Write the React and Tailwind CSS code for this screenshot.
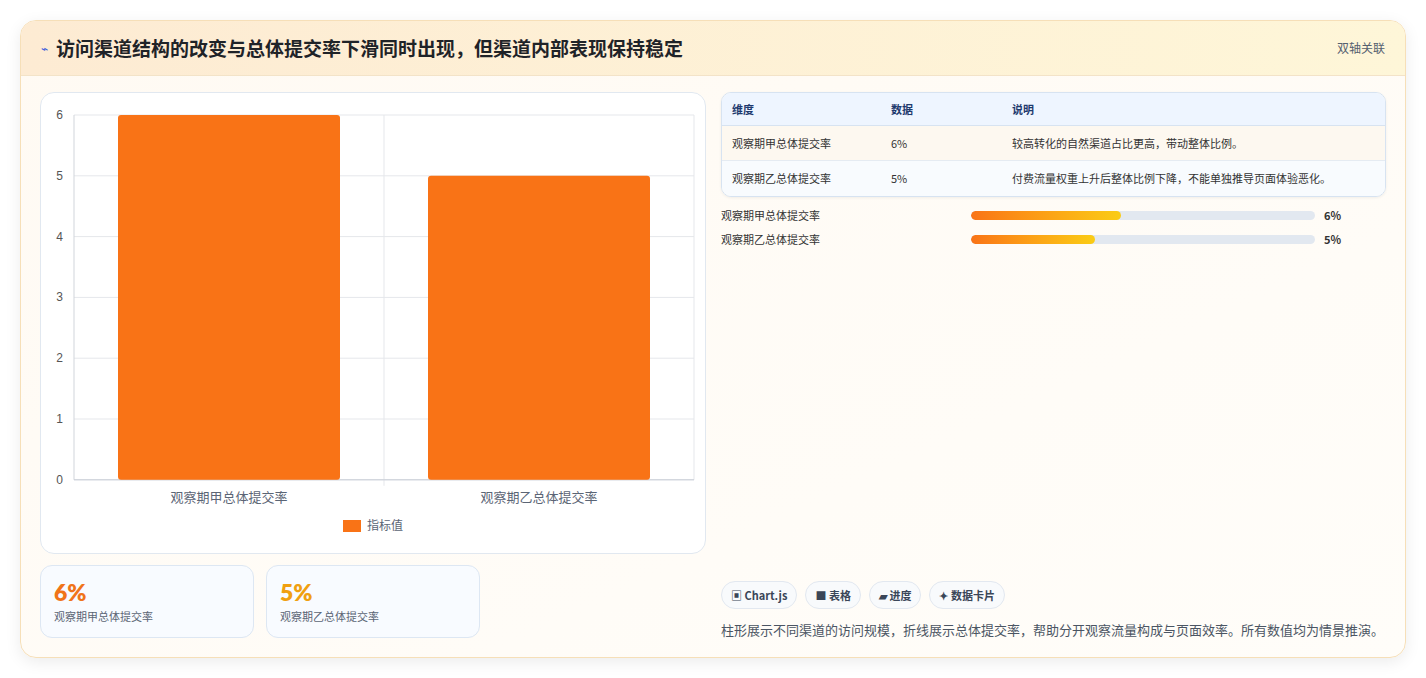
export default function App() {
  const f = { fontFamily: '"Noto Sans CJK SC", "Noto Sans", sans-serif' };
  const ticks = [6, 5, 4, 3, 2, 1, 0];
  const y = (v) => 22 + (6 - v) * 60.8;
  return (
    <div style={f} className="w-[1426px] h-[678px] bg-white p-[20px] pb-[20px]">
      <div className="h-[638px] rounded-[16px] border border-[#f6dfb8] bg-gradient-to-br from-[#fffaf3] to-[#fffdf9] shadow-[0_4px_16px_rgba(0,0,0,0.08)] overflow-hidden flex flex-col">
        <div className="h-[55px] shrink-0 flex items-center justify-between px-[20px] bg-gradient-to-r from-[#fdebd3] to-[#fef6d8] border-b border-[#f3e3c8]">
          <div className="flex items-center gap-[8px]">
            <span className="text-[#3b5bdb] text-[12px]">⌁</span>
            <span className="text-[19px] font-bold text-[#1f2328]">访问渠道结构的改变与总体提交率下滑同时出现，但渠道内部表现保持稳定</span>
          </div>
          <span className="text-[12px] text-[#556070]">双轴关联</span>
        </div>
        <div className="flex-1 flex gap-[15px] px-[19px] pt-[16px] pb-[18px]">
          <div className="w-[666px] flex flex-col gap-[11px]">
            <div className="h-[462px] rounded-[14px] border border-[#e1e8f0] bg-white relative">
              <svg width="666" height="462" className="absolute left-0 top-0">
                {ticks.map((t) => (
                  <g key={t}>
                    <line x1="33" x2="653" y1={y(t)} y2={y(t)} stroke="#e5e7eb" />
                    <text x="22" y={y(t) + 4} fontSize="12" fill="#555" textAnchor="end" fontFamily="Liberation Sans, sans-serif">{t}</text>
                  </g>
                ))}
                <line x1="33" x2="33" y1="22" y2={y(0)} stroke="#d1d5db" />
                <line x1="343" x2="343" y1="22" y2={y(0) + 6} stroke="#e5e7eb" />
                <line x1="653" x2="653" y1="22" y2={y(0)} stroke="#e5e7eb" />
                <line x1="33" x2="653" y1={y(0)} y2={y(0)} stroke="#c8ced6" />
                <rect x="77" y={y(6)} width="222" height={y(0) - y(6)} rx="3" fill="#f97316" />
                <rect x="387" y={y(5)} width="222" height={y(0) - y(5)} rx="3" fill="#f97316" />
                <text x="188" y="409" fontSize="13" fill="#5b6575" textAnchor="middle">观察期甲总体提交率</text>
                <text x="498" y="409" fontSize="13" fill="#5b6575" textAnchor="middle">观察期乙总体提交率</text>
                <rect x="302" y="427" width="18" height="12" fill="#f97316" />
                <text x="326" y="437" fontSize="12" fill="#5b6575">指标值</text>
              </svg>
            </div>
            <div className="flex gap-[12px]">
              {[["6%", "text-[#f07419]", "观察期甲总体提交率"], ["5%", "text-[#f0a010]", "观察期乙总体提交率"]].map(([v, c, l]) => (
                <div key={l} className="w-[214px] h-[73px] rounded-[12px] border border-[#dde7f3] bg-[#f8fbff] px-[13px] pt-[12px]">
                  <div className={`text-[23px] font-extrabold leading-[28px] ${c}`} style={{ fontFamily: 'Lato, "Noto Sans", sans-serif' }}>{v}</div>
                  <div className="text-[11px] text-[#5b6575] mt-[2px]">{l}</div>
                </div>
              ))}
            </div>
          </div>
          <div className="flex-1 flex flex-col">
            <div className="rounded-[10px] border border-[#d7e3f1] overflow-hidden text-[11px] shadow-[0_1px_3px_rgba(0,0,0,0.06)]">
              <div className="flex h-[33px] items-center bg-[#eef5ff] border-b border-[#d7e3f1] font-bold text-[#1e3a6e] px-[10px]">
                <span className="w-[159px]">维度</span><span className="w-[121px]">数据</span><span>说明</span>
              </div>
              <div className="flex h-[35px] items-center bg-[#fdf8f0] border-b border-[#e5ebf2] text-[#333] px-[10px]">
                <span className="w-[159px]">观察期甲总体提交率</span><span className="w-[121px]">6%</span><span>较高转化的自然渠道占比更高，带动整体比例。</span>
              </div>
              <div className="flex h-[35px] items-center bg-[#f8fbfe] text-[#333] px-[10px]">
                <span className="w-[159px]">观察期乙总体提交率</span><span className="w-[121px]">5%</span><span>付费流量权重上升后整体比例下降，不能单独推导页面体验恶化。</span>
              </div>
            </div>
            <div className="mt-[10px] flex flex-col gap-[8px] text-[11px] text-[#333]">
              {[["观察期甲总体提交率", "43.5%", "6%"], ["观察期乙总体提交率", "36%", "5%"]].map(([l, w, v]) => (
                <div key={l} className="flex items-center h-[16px]">
                  <span className="w-[250px]">{l}</span>
                  <div className="w-[344px] h-[9px] rounded-full bg-[#e2e8f0] overflow-hidden">
                    <div className="h-full rounded-full bg-gradient-to-r from-[#f97316] to-[#facc15]" style={{ width: w }} />
                  </div>
                  <span className="ml-[9px] font-bold">{v}</span>
                </div>
              ))}
            </div>
            <div className="flex-1" />
            <div className="flex gap-[8px] text-[11px] font-bold text-[#3a4658]">
              {["▣ Chart.js", "■ 表格", "▰ 进度", "✦ 数据卡片"].map((c) => (
                <span key={c} className="h-[28px] px-[9px] rounded-full border border-[#e2e8f0] bg-[#f8fafc] flex items-center">{c}</span>
              ))}
            </div>
            <div className="mt-[12px] text-[13px] text-[#4b5563] h-[18px] leading-[18px]">柱形展示不同渠道的访问规模，折线展示总体提交率，帮助分开观察流量构成与页面效率。所有数值均为情景推演。</div>
          </div>
        </div>
      </div>
    </div>
  );
}
